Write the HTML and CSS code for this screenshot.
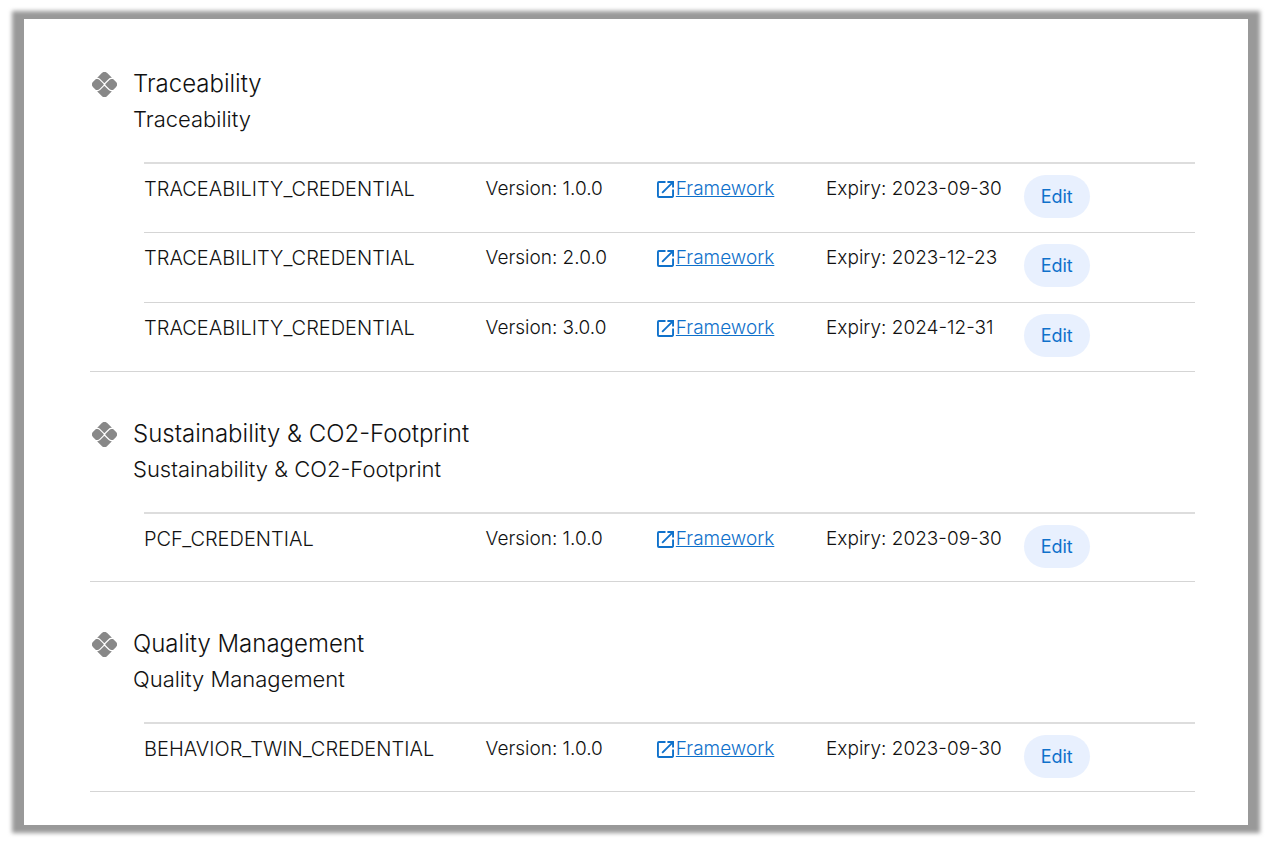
FILE: index.html
```
<!DOCTYPE html>
<html lang="en">
<head>
<meta charset="utf-8">
<meta name="viewport" content="width=device-width, initial-scale=1">
<title>Use case credentials</title>
<link rel="stylesheet" href="styles.css">
</head>
<body>
<svg class="defs" width="0" height="0" aria-hidden="true">
  <symbol id="clover" viewBox="0 0 24 24">
    <path d="M5.283 18.360a3.505 3.505 0 0 0 2.493-1.032l3.600-3.600a.684.684 0 0 1 .946 0l3.613 3.613a3.504 3.504 0 0 0 2.493 1.032h.71l-4.560 4.560a3.647 3.647 0 0 1-5.156 0L4.850 18.360ZM18.428 5.627a3.505 3.505 0 0 0-2.493 1.032l-3.613 3.614a.67.67 0 0 1-.946 0l-3.600-3.600A3.505 3.505 0 0 0 5.283 5.640h-.434l4.573-4.572a3.646 3.646 0 0 1 5.156 0l4.559 4.559Z"/>
    <path d="M1.068 9.422 3.790 6.699H5.283a2.483 2.483 0 0 1 1.744.722L10.900 11.300Q11.500 12 10.900 12.700L7.027 16.579a2.483 2.483 0 0 1-1.744.722H3.791l-2.723-2.723a3.646 3.646 0 0 1 0-5.156Z"/>
    <path d="M22.932 9.422 20.210 6.699H18.717a2.483 2.483 0 0 0-1.744.722L13.100 11.300Q12.500 12 13.100 12.700L16.973 16.579a2.483 2.483 0 0 0 1.744.722H20.209l2.723-2.723a3.646 3.646 0 0 0 0-5.156Z"/>
  </symbol>
  <symbol id="launch" viewBox="3 3 18 18">
    <path d="M19 19H5V5h7V3H5a2 2 0 0 0-2 2v14a2 2 0 0 0 2 2h14c1.100 0 2-.9 2-2v-7h-2v7zM14 3v2h3.590l-9.830 9.830 1.410 1.410L19 6.410V10h2V3h-7z"/>
  </symbol>
</svg>
<main class="panel">
  <section class="group">
    <header class="group-head">
      <svg class="group-icon" aria-hidden="true"><use href="#clover"/></svg>
      <div><h2 class="group-title">Traceability</h2><p class="group-text">Traceability</p></div>
    </header>
    <table class="credentials">
      <tr><td class="name">TRACEABILITY_CREDENTIAL</td><td class="version">Version: 1.0.0</td><td class="link"><a href="#"><svg aria-hidden="true"><use href="#launch"/></svg><span>Framework</span></a></td><td class="expiry">Expiry: 2023-09-30</td><td class="action"><button type="button">Edit</button></td></tr>
      <tr><td class="name">TRACEABILITY_CREDENTIAL</td><td class="version">Version: 2.0.0</td><td class="link"><a href="#"><svg aria-hidden="true"><use href="#launch"/></svg><span>Framework</span></a></td><td class="expiry">Expiry: 2023-12-23</td><td class="action"><button type="button">Edit</button></td></tr>
      <tr><td class="name">TRACEABILITY_CREDENTIAL</td><td class="version">Version: 3.0.0</td><td class="link"><a href="#"><svg aria-hidden="true"><use href="#launch"/></svg><span>Framework</span></a></td><td class="expiry">Expiry: 2024-12-31</td><td class="action"><button type="button">Edit</button></td></tr>
    </table>
  </section>
  <section class="group">
    <header class="group-head">
      <svg class="group-icon" aria-hidden="true"><use href="#clover"/></svg>
      <div><h2 class="group-title">Sustainability &amp; CO2-Footprint</h2><p class="group-text">Sustainability &amp; CO2-Footprint</p></div>
    </header>
    <table class="credentials">
      <tr><td class="name">PCF_CREDENTIAL</td><td class="version">Version: 1.0.0</td><td class="link"><a href="#"><svg aria-hidden="true"><use href="#launch"/></svg><span>Framework</span></a></td><td class="expiry">Expiry: 2023-09-30</td><td class="action"><button type="button">Edit</button></td></tr>
    </table>
  </section>
  <section class="group">
    <header class="group-head">
      <svg class="group-icon" aria-hidden="true"><use href="#clover"/></svg>
      <div><h2 class="group-title">Quality Management</h2><p class="group-text">Quality Management</p></div>
    </header>
    <table class="credentials">
      <tr><td class="name">BEHAVIOR_TWIN_CREDENTIAL</td><td class="version">Version: 1.0.0</td><td class="link"><a href="#"><svg aria-hidden="true"><use href="#launch"/></svg><span>Framework</span></a></td><td class="expiry">Expiry: 2023-09-30</td><td class="action"><button type="button">Edit</button></td></tr>
    </table>
  </section>
</main>
</body>
</html>
```
FILE: styles.css
```
* { box-sizing: border-box; }
body {
  margin: 0;
  padding: 19px 24px;
  background: #fff;
  color: #111;
  font-family: Inter, "Liberation Sans", sans-serif;
  font-weight: 300;
}
.defs { position: absolute; }
.panel {
  position: relative;
  isolation: isolate;
  padding: 3px 53px 33px 66px;
  background: #fff;
}
/* soft grey frame behind the panel */
.panel::before {
  content: "";
  position: absolute;
  inset: -8px -12px;
  z-index: -2;
  background: #999;
  filter: blur(2px);
}
.panel::after {
  content: "";
  position: absolute;
  inset: 0;
  z-index: -1;
  background: #fff;
}
.group { border-bottom: 1px solid #d5d5d5; }
.group-head {
  display: flex;
  gap: 16px;
  height: 140px;
  padding: 45px 0 0 2px;
}
.group-icon {
  width: 25px;
  height: 25px;
  margin-top: 5px;
  fill: #888;
}
.group-title, .group-text { margin: 0; font-weight: 300; }
.group-title { font-size: 24px; line-height: 34px; }
.group-text { font-size: 22px; line-height: 36px; }
.credentials {
  width: calc(100% - 54px);
  margin: 0 0 -1px 54px;
  border-collapse: separate;
  border-spacing: 0;
  table-layout: fixed;
}
.credentials td {
  height: 70px;
  padding: 11px 0 0;
  border-top: 1px solid #d5d5d5;
  font-size: 19px;
  line-height: 28px;
  vertical-align: top;
  white-space: nowrap;
}
.credentials tr:first-child td { border-top: 2px solid #ddd; }
.credentials .name { width: 32.500%; font-size: 20px; }
.version, .link { width: 16.200%; }
.expiry { width: 18.800%; }
.link a {
  display: inline-flex;
  align-items: center;
  gap: 2px;
  color: #0f71cb;
  text-decoration: none;
}
.link span { text-decoration: underline; }
.link svg { width: 17px; height: 17px; margin-left: 1px; fill: currentColor; }
.action button {
  display: block;
  height: 43px;
  padding: 0 17px;
  border: 0;
  border-radius: 22px;
  background: #e8f0fe;
  color: #0f71cb;
  font: 400 18px/28px Inter, "Liberation Sans", sans-serif;
}
```
